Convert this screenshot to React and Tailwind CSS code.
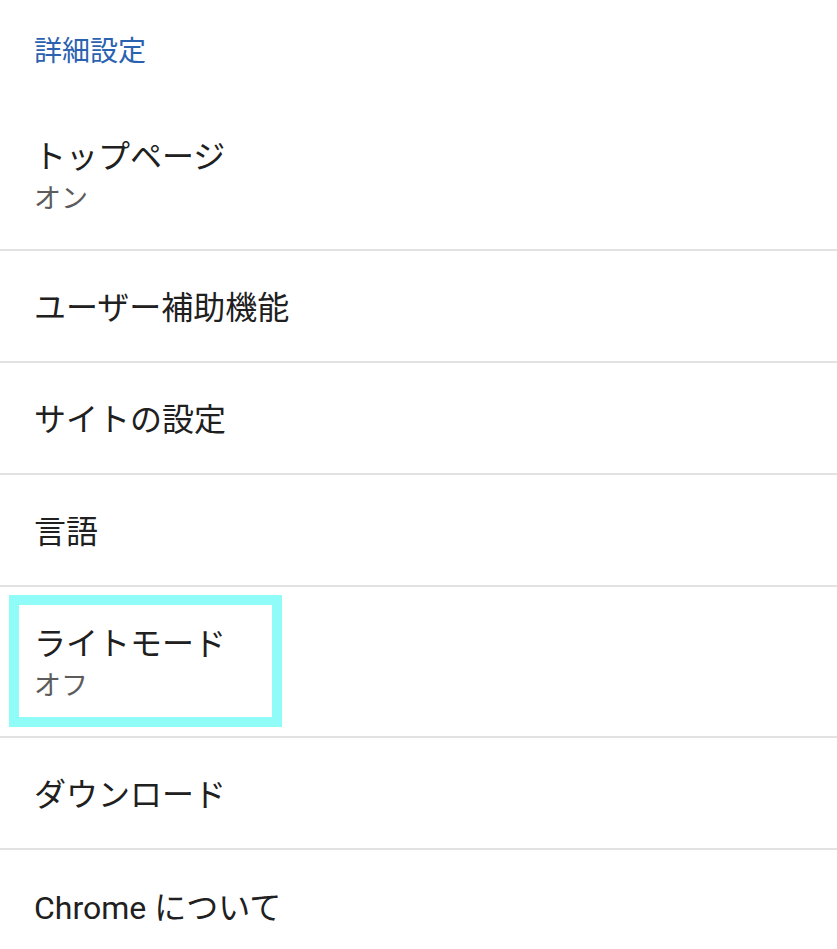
import React from 'react';

const font = { fontFamily: 'Roboto, "Noto Sans CJK JP", "Noto Sans", sans-serif' };

function Row({ title, sub, highlight, last }) {
  return (
    <div className={`relative flex flex-col justify-center px-[34px] pt-[4px] ${sub ? 'h-[151px]' : 'h-[112px]'} ${last ? '' : 'border-b-2 border-[#e2e2e2]'}`}>
      <div className="text-[32px] leading-[44px] text-[#202020]">{title}</div>
      {sub && <div className="text-[27px] leading-[40px] text-[#5c5c5c]">{sub}</div>}
      {highlight && (
        <div className="absolute left-[9px] top-[8px] w-[273px] h-[132px] border-[10px] border-[#8ffcf8]" />
      )}
    </div>
  );
}

export default function App() {
  return (
    <div className="w-[837px] h-[949px] bg-white overflow-hidden" style={font}>
      <div className="h-[100px] flex items-center px-[34px] pt-[3px] text-[28px] text-[#2a62b0]">詳細設定</div>
      <Row title="トップページ" sub="オン" />
      <Row title="ユーザー補助機能" />
      <Row title="サイトの設定" />
      <Row title="言語" />
      <Row title="ライトモード" sub="オフ" highlight />
      <Row title="ダウンロード" />
      <Row title="Chrome について" last />
    </div>
  );
}
